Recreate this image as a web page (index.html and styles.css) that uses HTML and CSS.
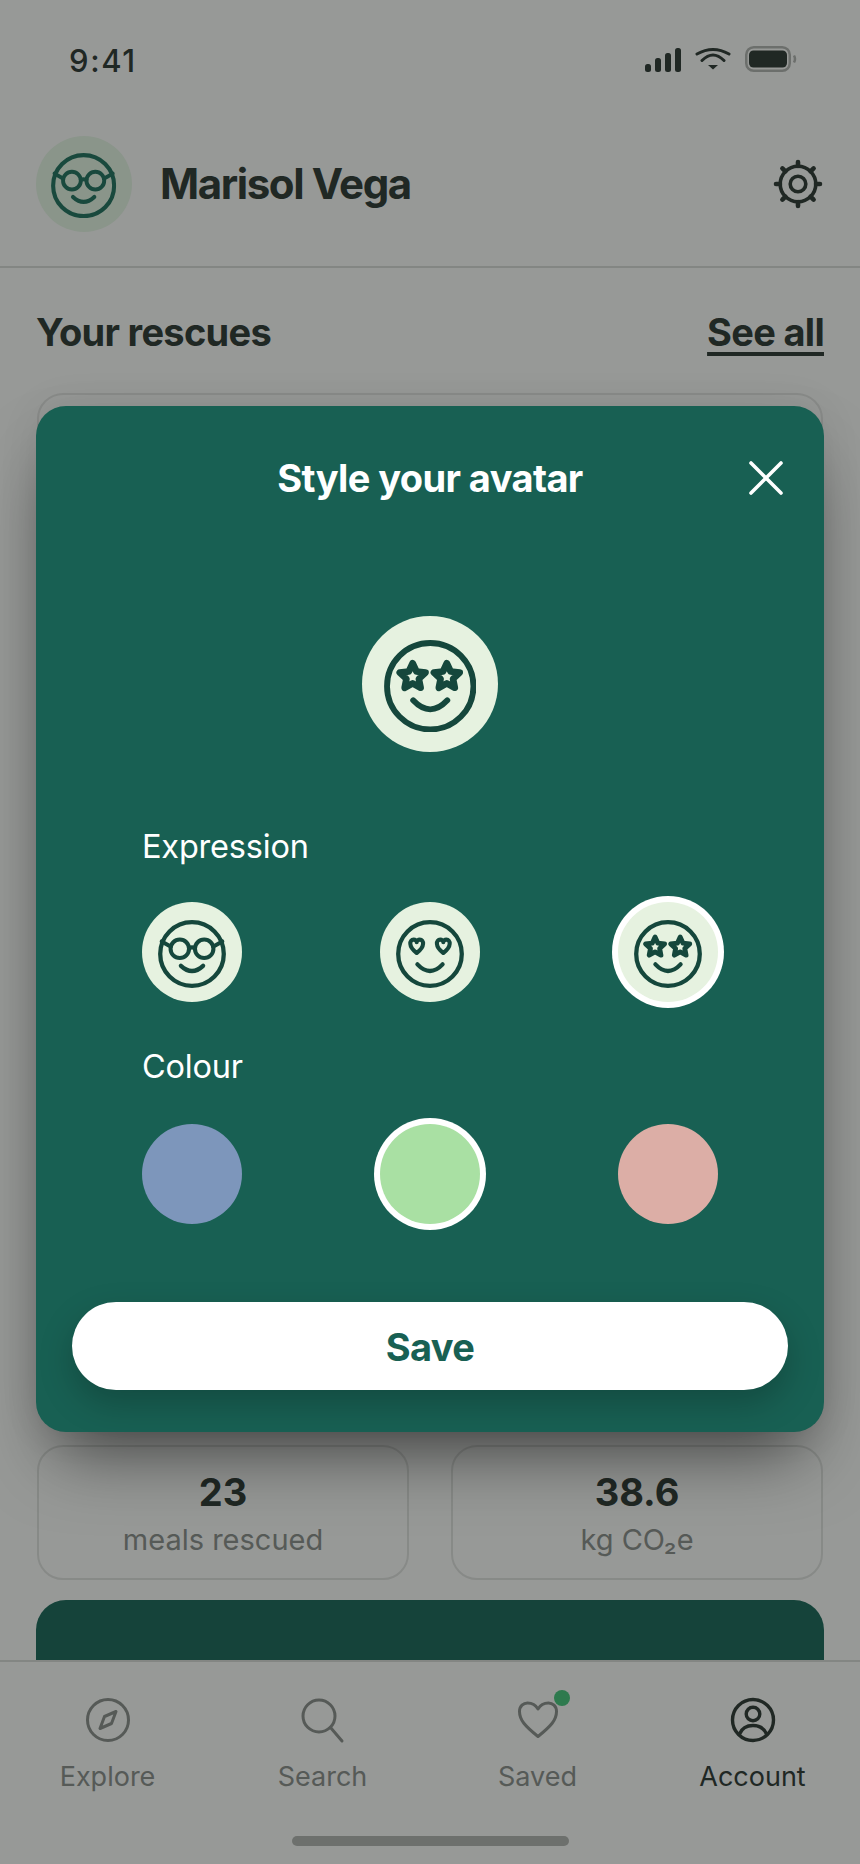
FILE: index.html
```html
<!DOCTYPE html>
<html lang="en">

<head>
    <meta charset="UTF-8" />
    <meta name="viewport" content="width=device-width, initial-scale=1.0" />
    <title>Account – Marisol Vega</title>
    <link rel="stylesheet" href="styles.css">
</head>

<body>
    <svg class="sprites" width="0" height="0" aria-hidden="true">
        <symbol id="face-glasses" viewBox="0 0 92 92">
            <g fill="none" stroke="currentColor" stroke-width="5.8" stroke-linecap="round" stroke-linejoin="round">
                <circle cx="46" cy="46" r="43" />
                <circle cx="29.5" cy="39" r="12.5" stroke-width="5.5" />
                <circle cx="62.5" cy="39" r="12.5" stroke-width="5.5" />
                <path d="M42 38Q46 36 50 38M5 29L17 36M87 29L75 36" stroke-width="5.5" />
                <path d="M31 62Q46 76 61 62" />
            </g>
        </symbol>
        <symbol id="face-hearts" viewBox="0 0 92 92">
            <g fill="none" stroke="currentColor" stroke-width="5.8" stroke-linecap="round" stroke-linejoin="round">
                <circle cx="46" cy="46" r="43" />
                <path transform="translate(28 35) scale(1.2)" stroke-width="4.6" d="M0 8C-10 1-8-7-3.5-7C-1.5-7 0-5.5 0-4C0-5.5 1.5-7 3.5-7C8-7 10 1 0 8Z" />
                <path transform="translate(64 35) scale(1.2)" stroke-width="4.6" d="M0 8C-10 1-8-7-3.5-7C-1.5-7 0-5.5 0-4C0-5.5 1.5-7 3.5-7C8-7 10 1 0 8Z" />
                <path d="M29 60Q46 78 63 60" />
            </g>
        </symbol>
        <symbol id="face-stars" viewBox="0 0 92 92">
            <g fill="none" stroke="currentColor" stroke-width="5.8" stroke-linecap="round" stroke-linejoin="round">
                <circle cx="46" cy="46" r="43" />
                <polygon transform="translate(28.5 36.6)" stroke-width="6.6" points="0,-13.5 3.82,-5.26 12.84,-4.17 6.18,2.01 7.94,10.92 0,6.5 -7.94,10.92 -6.18,2.01 -12.84,-4.17 -3.82,-5.26" />
                <polygon transform="translate(62.5 36.6)" stroke-width="6.6" points="0,-13.5 3.82,-5.26 12.84,-4.17 6.18,2.01 7.94,10.92 0,6.5 -7.94,10.92 -6.18,2.01 -12.84,-4.17 -3.82,-5.26" />
                <path d="M29 60Q46 78 63 60" />
            </g>
        </symbol>
    </svg>

    <div class="screen">
        <div class="status-bar">
            <span class="time">9:41</span>
            <div class="status-icons">
                <svg class="signal" width="36" height="24" viewBox="0 0 36 24">
                    <rect x="0" y="16" width="6" height="8" rx="2.5" />
                    <rect x="10" y="10" width="6" height="14" rx="2.5" />
                    <rect x="20" y="5" width="6" height="19" rx="2.5" />
                    <rect x="30" y="0" width="6" height="24" rx="2.5" />
                </svg>
                <svg class="wifi" width="36" height="24" viewBox="0 0 36 24">
                    <path d="M2 7Q18-2 34 7M7 13.5Q18 2.5 29 13.5" fill="none" stroke="currentColor" stroke-width="3" stroke-linecap="round" />
                    <polygon points="13,18 23,18 18,22.5" fill="currentColor" />
                </svg>
                <svg class="battery" width="52" height="26" viewBox="0 0 52 26">
                    <rect x="1.25" y="1.25" width="43.5" height="23.5" rx="7.5" class="battery-shell" />
                    <rect x="4" y="4.5" width="38" height="17" rx="4.5" class="battery-fill" />
                    <path d="M49 9.5Q51 13 49 16.5" class="battery-tip" />
                </svg>
            </div>
        </div>

        <header class="profile">
            <div class="avatar avatar-small">
                <svg><use href="#face-glasses" /></svg>
            </div>
            <h1 class="profile-name">Marisol Vega</h1>
            <svg class="gear" width="50" height="50" viewBox="0 0 50 50" fill="none" stroke="currentColor" stroke-linecap="round">
                <circle cx="25" cy="25" r="17.8" stroke-width="3.6" />
                <circle cx="25" cy="25" r="7.8" stroke-width="3.6" />
                <path stroke-width="4.6" d="M25 3V7M25 43V47M3 25H7M43 25H47M9.4 9.4L12.4 12.4M37.6 37.6L40.6 40.6M9.4 40.6L12.4 37.6M37.6 12.4L40.6 9.4" />
            </svg>
        </header>

        <main class="content">
            <div class="section-head">
                <h2>Your rescues</h2>
                <a class="see-all" href="#">See all</a>
            </div>
            <div class="rescue-card"></div>
            <div class="stats">
                <div class="stat">
                    <strong>23</strong>
                    <span>meals rescued</span>
                </div>
                <div class="stat">
                    <strong>38.6</strong>
                    <span>kg CO₂e</span>
                </div>
            </div>
            <div class="promo"></div>
        </main>

        <nav class="tabs">
            <a class="tab" href="#">
                <svg width="48" height="48" viewBox="0 0 48 48" fill="none" stroke="currentColor" stroke-width="3" stroke-linejoin="round">
                    <circle cx="24" cy="24" r="20.5" />
                    <path d="M32 15.5L27.5 27.5L16 32.500L20.500 20.500Z" />
                </svg>
                <span>Explore</span>
            </a>
            <a class="tab" href="#">
                <svg width="48" height="48" viewBox="0 0 48 48" fill="none" stroke="currentColor" stroke-width="3" stroke-linecap="round">
                    <circle cx="20" cy="20" r="16" />
                    <path d="M31.500 31.500L43 45" />
                </svg>
                <span>Search</span>
            </a>
            <a class="tab" href="#">
                <span class="tab-icon">
                    <svg width="48" height="48" viewBox="0 0 48 48" fill="none" stroke="currentColor" stroke-width="3" stroke-linejoin="round">
                        <path d="M24 40.500C11 30 5.500 24 5.500 15.500C5.500 10 9.500 7 13.500 7C18 7 22 9.500 24 13C26 9.500 30 7 34.500 7C38.500 7 42.500 10 42.500 15.500C42.500 24 37 30 24 40.500Z" />
                    </svg>
                    <i class="badge"></i>
                </span>
                <span>Saved</span>
            </a>
            <a class="tab tab-active" href="#">
                <svg width="48" height="48" viewBox="0 0 48 48" fill="none" stroke="currentColor" stroke-width="3.4">
                    <circle cx="24" cy="24" r="20.5" />
                    <circle cx="24" cy="18" r="6.800" />
                    <path d="M10.500 38C13 32 18 29.500 24 29.500C30 29.500 35 32 37.500 38" />
                </svg>
                <span>Account</span>
            </a>
        </nav>
        <div class="home-bar"></div>

        <div class="scrim"></div>

        <section class="modal">
            <div class="modal-head">
                <h2>Style your avatar</h2>
                <button class="close" aria-label="Close">
                    <svg width="36" height="36" viewBox="0 0 36 36" fill="none" stroke="currentColor" stroke-width="3.6" stroke-linecap="round">
                        <path d="M3 3L33 33M33 3L3 33" />
                    </svg>
                </button>
            </div>

            <div class="avatar avatar-large">
                <svg><use href="#face-stars" /></svg>
            </div>

            <div class="options">
                <h3>Expression</h3>
                <div class="option-row">
                    <div class="avatar avatar-option"><svg><use href="#face-glasses" /></svg></div>
                    <div class="avatar avatar-option"><svg><use href="#face-hearts" /></svg></div>
                    <div class="avatar avatar-option selected"><svg><use href="#face-stars" /></svg></div>
                </div>
                <h3 class="colour-label">Colour</h3>
                <div class="option-row">
                    <div class="swatch swatch-blue"></div>
                    <div class="swatch swatch-green selected"></div>
                    <div class="swatch swatch-pink"></div>
                </div>
            </div>

            <button class="save-btn">Save</button>
        </section>
    </div>
</body>

</html>
```

FILE: styles.css
```css
*,
*::before,
*::after {
    box-sizing: border-box;
    margin: 0;
    padding: 0;
}

body {
    background: #fcfffc;
    font-family: 'Inter', 'Liberation Sans', sans-serif;
    color: #36433c;
}

a {
    color: inherit;
    text-decoration: none;
}

.sprites {
    position: absolute;
}

.screen {
    position: relative;
    width: 860px;
    height: 1864px;
    overflow: hidden;
    display: flex;
    flex-direction: column;
}

/* status bar */
.status-bar {
    height: 110px;
    padding: 46px 63px 0 69px;
    display: flex;
    justify-content: space-between;
    align-items: flex-start;
}

.time {
    font-size: 31px;
    font-weight: 500;
    line-height: 30px;
    letter-spacing: 1.6px;
}

.status-icons {
    display: flex;
    gap: 14px;
    color: #36433c;
}

.signal {
    fill: currentColor;
    margin-top: 2px;
}

.wifi {
    margin-top: 1px;
}

.battery-shell {
    fill: none;
    stroke: #b4b9b4;
    stroke-width: 2.5;
}

.battery-fill {
    fill: currentColor;
}

.battery-tip {
    fill: none;
    stroke: #b4b9b4;
    stroke-width: 2.500;
}

/* profile header */
.profile {
    height: 158px;
    padding: 26px 37px 0 36px;
    display: flex;
    align-items: flex-start;
    border-bottom: 2px solid #dadfda;
}

.avatar {
    border-radius: 50%;
    background: #e6f2e0;
    color: #15473c;
    display: flex;
    align-items: center;
    justify-content: center;
    flex-shrink: 0;
}

.avatar svg {
    width: 68%;
    height: 68%;
    margin-top: 3%;
}

.avatar-small {
    width: 96px;
    height: 96px;
    background: #e6f8e6;
    color: #2a7a67;
}

.profile-name {
    font-size: 42px;
    font-weight: 700;
    letter-spacing: -1.4px;
    line-height: 96px;
    margin-left: 28px;
    flex: 1;
}

.gear {
    margin: 23px 0 0 0;
}

/* page content */
.content {
    flex: 1;
    min-height: 0;
    overflow: hidden;
    padding: 0 36px;
}

.section-head {
    padding-top: 40px;
    height: 125px;
    display: flex;
    justify-content: space-between;
    align-items: flex-start;
    font-size: 38px;
    line-height: 48px;
}

.section-head h2 {
    font-size: 38px;
    font-weight: 700;
    letter-spacing: -0.7px;
}

.see-all {
    font-weight: 700;
    letter-spacing: -0.7px;
    text-decoration: underline;
    text-decoration-thickness: 4px;
    text-underline-offset: 6px;
}

.rescue-card {
    height: 1036px;
    margin: 0 1px 16px;
    border: 2px solid #e6eae6;
    border-radius: 26px;
}

.stats {
    display: grid;
    grid-template-columns: 1fr 1fr;
    gap: 42px;
    margin: 0 1px 20px 1px;
}

.stat {
    height: 135px;
    border: 2px solid #e2e6e2;
    border-radius: 26px;
    padding-top: 23px;
    display: flex;
    flex-direction: column;
    align-items: center;
}

.stat strong {
    font-size: 38px;
    font-weight: 700;
    line-height: 44px;
}

.stat span {
    font-size: 29px;
    line-height: 40px;
    margin-top: 6px;
    color: #8f9691;
}

.promo {
    height: 200px;
    background: #237161;
    border-radius: 30px 30px 0 0;
}

/* tab bar */
.tabs {
    height: 204px;
    padding-top: 34px;
    border-top: 2px solid #dadfda;
    display: grid;
    grid-template-columns: repeat(4, 1fr);
    align-items: start;
    background: #fcfffc;
}

.tab {
    display: flex;
    flex-direction: column;
    align-items: center;
    gap: 15px;
    font-size: 27px;
    line-height: 36px;
    color: #8f9691;
}

.tab-icon {
    position: relative;
    display: block;
    height: 48px;
}

.tab svg {
    display: block;
}

.badge {
    position: absolute;
    top: -6px;
    right: -8px;
    width: 16px;
    height: 16px;
    border-radius: 50%;
    background: #4dcb82;
}

.tab-active {
    color: #36433c;
}

.home-bar {
    position: absolute;
    left: 292px;
    bottom: 18px;
    width: 277px;
    height: 10px;
    border-radius: 5px;
    background: #b6bbb6;
}

/* modal */
.scrim {
    position: absolute;
    inset: 0;
    background: rgba(0, 0, 0, 0.4);
}

.modal {
    position: absolute;
    left: 36px;
    top: 406px;
    width: 788px;
    height: 1026px;
    background: #186053;
    border-radius: 30px;
    box-shadow: 0 40px 70px -20px rgba(0, 0, 0, 0.55), 0 0 40px rgba(0, 0, 0, 0.08);
    color: #fff;
    display: flex;
    flex-direction: column;
    align-items: center;
}

.modal-head {
    width: 100%;
    height: 46px;
    margin-top: 49px;
    padding: 0 40px;
    display: grid;
    grid-template-columns: 1fr auto 1fr;
    align-items: center;
}

.modal-head h2 {
    grid-column: 2;
    font-size: 38px;
    font-weight: 700;
    letter-spacing: -0.6px;
    line-height: 46px;
}

.close {
    grid-column: 3;
    justify-self: end;
    background: none;
    border: none;
    color: #fff;
    height: 36px;
}

.avatar-large {
    width: 136px;
    height: 136px;
    margin-top: 115px;
}

.options {
    width: 100%;
    padding: 0 106px;
    margin-top: 75px;
}

.options h3 {
    font-size: 32.500px;
    font-weight: 400;
    line-height: 40px;
    letter-spacing: -0.2px;
}

.colour-label {
    margin-top: 45px;
}

.option-row {
    display: flex;
    justify-content: space-between;
    margin-top: 35px;
}

.avatar-option,
.swatch {
    width: 100px;
    height: 100px;
    border-radius: 50%;
}

.colour-label + .option-row {
    margin-top: 37px;
}

.selected {
    box-shadow: 0 0 0 6px #fff;
}

.swatch-blue {
    background: #7d96bb;
}

.swatch-green {
    background: #a9e0a3;
}

.swatch-pink {
    background: #dcaea6;
}

.save-btn {
    width: 716px;
    height: 88px;
    margin-top: 78px;
    padding-top: 2px;
    background: #fff;
    border: none;
    border-radius: 44px;
    box-shadow: 0 14px 34px rgba(0, 0, 0, 0.22);
    color: #186053;
    font-family: inherit;
    font-size: 38px;
    font-weight: 700;
    letter-spacing: -0.6px;
}
```
